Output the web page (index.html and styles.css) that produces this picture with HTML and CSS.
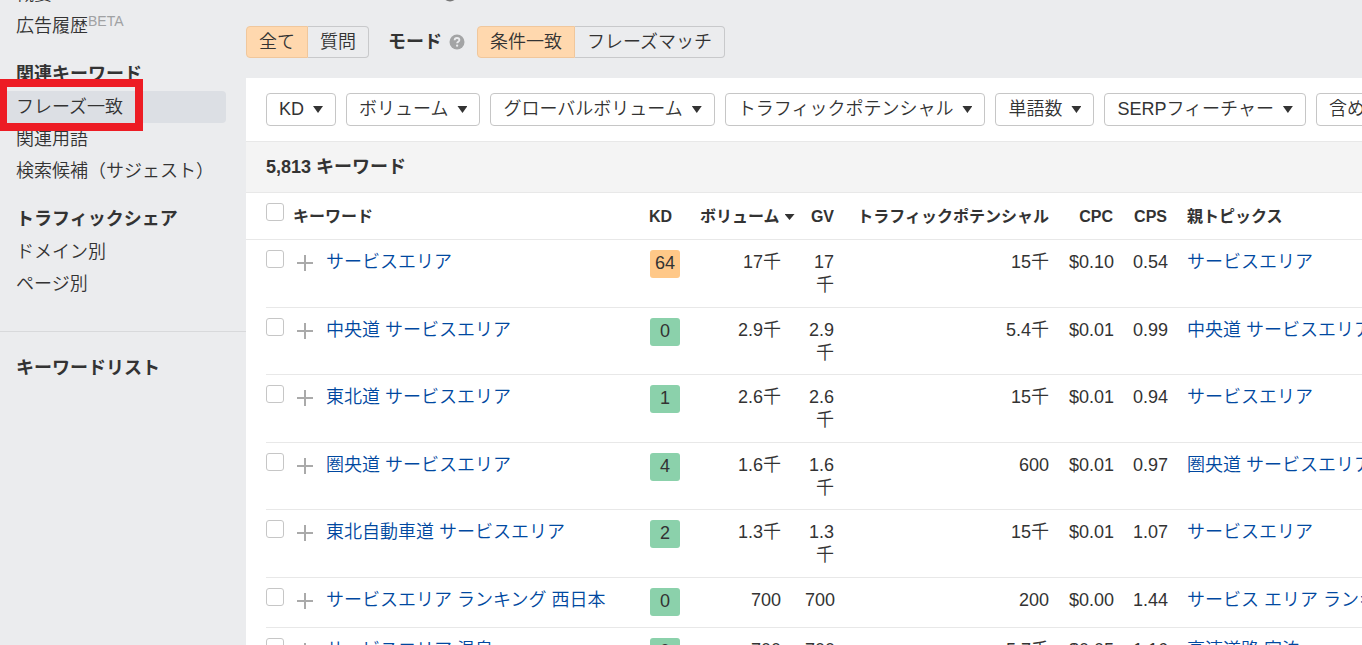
FILE: index.html
```html
<!DOCTYPE html>
<html lang="ja">
<head>
<meta charset="utf-8">
<title>フレーズ一致</title>
<link rel="stylesheet" href="styles.css">
</head>
<body>
<div class="app">
  <nav class="sidebar" aria-label="メニュー">
    <ul class="menu menu-top">
      <li><a class="item" href="#">概要</a></li>
      <li><a class="item" href="#">広告履歴<sup class="beta">BETA</sup></a></li>
    </ul>
    <h2 class="menu-title">関連キーワード</h2>
    <ul class="menu">
      <li class="marked"><a class="item selected" href="#" aria-current="page">フレーズ一致</a><span class="marker"></span></li>
      <li><a class="item" href="#">関連用語</a></li>
      <li><a class="item" href="#">検索候補（サジェスト）</a></li>
    </ul>
    <h2 class="menu-title">トラフィックシェア</h2>
    <ul class="menu">
      <li><a class="item" href="#">ドメイン別</a></li>
      <li><a class="item" href="#">ページ別</a></li>
    </ul>
    <div class="lists"><h2 class="menu-title">キーワードリスト</h2></div>
  </nav>
  <main class="main">
    <div class="title-row">
      <svg class="help" viewBox="0 0 16 16" aria-hidden="true"><circle cx="8" cy="8" r="7.5" fill="#777"/></svg>
    </div>
    <div class="modes">
      <div class="segment">
        <button class="seg on" type="button">全て</button>
        <button class="seg" type="button">質問</button>
      </div>
      <div class="mode-label">モード
        <svg class="help" viewBox="0 0 16 16" aria-hidden="true"><circle cx="8" cy="8" r="7.5" fill="#a3a4a5"/><path d="M5.6 6.3C5.7 4.9 6.7 4 8 4c1.400 0 2.400.8 2.400 2 0 1.700-2.300 1.700-2.300 3.300" fill="none" stroke="#ebecee" stroke-width="1.800"/><circle cx="8.100" cy="11.700" r="1.150" fill="#ebecee"/></svg>
      </div>
      <div class="segment">
        <button class="seg on" type="button">条件一致</button>
        <button class="seg" type="button">フレーズマッチ</button>
      </div>
    </div>
    <section class="panel">
      <div class="filters">
        <button class="filter" type="button">KD<i class="caret"></i></button>
        <button class="filter" type="button">ボリューム<i class="caret"></i></button>
        <button class="filter" type="button">グローバルボリューム<i class="caret"></i></button>
        <button class="filter" type="button">トラフィックポテンシャル<i class="caret"></i></button>
        <button class="filter" type="button">単語数<i class="caret"></i></button>
        <button class="filter" type="button">SERPフィーチャー<i class="caret"></i></button>
        <button class="filter" type="button">含める<i class="caret"></i></button>
      </div>
      <div class="count">5,813 キーワード</div>
      <div class="table-wrap">
        <table class="keywords">
          <colgroup><col class="c-check"><col class="c-plus"><col><col class="c-kd"><col class="c-vol"><col class="c-gv"><col class="c-tp"><col class="c-cpc"><col class="c-cps"><col class="c-topic"></colgroup>
          <thead>
            <tr><th class="check"><input type="checkbox" aria-label="全て選択"></th><th class="kw" colspan="2">キーワード</th><th class="kd">KD</th><th class="num vol">ボリューム<i class="caret sort"></i></th><th class="num gv">GV</th><th class="num">トラフィックポテンシャル</th><th class="num">CPC</th><th class="num">CPS</th><th class="topic">親トピックス</th></tr>
          </thead>
          <tbody>
            <tr><td class="check"><input type="checkbox" aria-label="サービスエリア"></td><td class="plus"><button type="button" aria-label="追加"></button></td><td><a href="#">サービスエリア</a></td><td class="kd"><span class="badge hard">64</span></td><td class="num">17千</td><td class="num gv">17千</td><td class="num">15千</td><td class="num">$0.10</td><td class="num">0.54</td><td class="topic"><a href="#">サービスエリア</a></td></tr>
            <tr><td class="check"><input type="checkbox" aria-label="中央道 サービスエリア"></td><td class="plus"><button type="button" aria-label="追加"></button></td><td><a href="#">中央道 サービスエリア</a></td><td class="kd"><span class="badge">0</span></td><td class="num">2.9千</td><td class="num gv">2.9千</td><td class="num">5.4千</td><td class="num">$0.01</td><td class="num">0.99</td><td class="topic"><a href="#">中央道 サービスエリア</a></td></tr>
            <tr><td class="check"><input type="checkbox" aria-label="東北道 サービスエリア"></td><td class="plus"><button type="button" aria-label="追加"></button></td><td><a href="#">東北道 サービスエリア</a></td><td class="kd"><span class="badge">1</span></td><td class="num">2.6千</td><td class="num gv">2.6千</td><td class="num">15千</td><td class="num">$0.01</td><td class="num">0.94</td><td class="topic"><a href="#">サービスエリア</a></td></tr>
            <tr><td class="check"><input type="checkbox" aria-label="圏央道 サービスエリア"></td><td class="plus"><button type="button" aria-label="追加"></button></td><td><a href="#">圏央道 サービスエリア</a></td><td class="kd"><span class="badge">4</span></td><td class="num">1.6千</td><td class="num gv">1.6千</td><td class="num">600</td><td class="num">$0.01</td><td class="num">0.97</td><td class="topic"><a href="#">圏央道 サービスエリア</a></td></tr>
            <tr><td class="check"><input type="checkbox" aria-label="東北自動車道 サービスエリア"></td><td class="plus"><button type="button" aria-label="追加"></button></td><td><a href="#">東北自動車道 サービスエリア</a></td><td class="kd"><span class="badge">2</span></td><td class="num">1.3千</td><td class="num gv">1.3千</td><td class="num">15千</td><td class="num">$0.01</td><td class="num">1.07</td><td class="topic"><a href="#">サービスエリア</a></td></tr>
            <tr><td class="check"><input type="checkbox" aria-label="サービスエリア ランキング 西日本"></td><td class="plus"><button type="button" aria-label="追加"></button></td><td><a href="#">サービスエリア ランキング 西日本</a></td><td class="kd"><span class="badge">0</span></td><td class="num">700</td><td class="num gv">700</td><td class="num">200</td><td class="num">$0.00</td><td class="num">1.44</td><td class="topic"><a href="#">サービス エリア ランキング</a></td></tr>
            <tr><td class="check"><input type="checkbox" aria-label="サービスエリア 温泉"></td><td class="plus"><button type="button" aria-label="追加"></button></td><td><a href="#">サービスエリア 温泉</a></td><td class="kd"><span class="badge">0</span></td><td class="num">700</td><td class="num gv">700</td><td class="num">5.7千</td><td class="num">$0.05</td><td class="num">1.16</td><td class="topic"><a href="#">高速道路 宿泊</a></td></tr>
          </tbody>
        </table>
      </div>
    </section>
  </main>
</div>
</body>
</html>
```
FILE: styles.css
```css
* { box-sizing: border-box; }
body {
  margin: 0;
  background: #ebecee;
  color: #333;
  font: 350 18px/23px "Liberation Sans", "Noto Sans CJK JP", sans-serif;
}
button, input { font: inherit; color: inherit; margin: 0; }
a { color: #0048a0; text-decoration: none; }
.app { display: flex; height: 100vh; overflow: hidden; }

.sidebar { flex: 0 0 246px; line-height: 32px; }
.menu { list-style: none; margin: 0; padding: 0; }
.menu-top { margin-top: -22px; }
.item { display: block; width: 226px; height: 32px; padding-left: 16px; color: #333; border-radius: 0 4px 4px 0; white-space: nowrap; }
.selected { background: #dcdfe4; }
.beta { font-size: 14px; line-height: 1; color: #a0a1a3; vertical-align: 6px; }
.menu-title { margin: 15px 0 0; padding-left: 16px; font-size: 18px; line-height: 34px; font-weight: 700; }
.lists { margin-top: 31px; padding-top: 4px; border-top: 1px solid #d8d9db; }
.marked { position: relative; }
.marker { position: absolute; left: -1px; top: -12px; width: 144px; height: 52px; border: 8px solid #ed1c24; }

.main { flex: 1; min-width: 0; }
.title-row { display: flex; align-items: center; height: 16px; margin: -14px 0 24px; padding-left: 196px; }
.modes { display: flex; align-items: center; }
.segment { display: flex; }
.seg { height: 32px; padding: 0 12px; border: 1px solid #c8c9cb; background: transparent; line-height: 28px; white-space: nowrap; }
.seg:first-child { border-radius: 4px 0 0 4px; border-right: 0; }
.seg:last-child { border-radius: 0 4px 4px 0; border-left: 0; }
.seg.on { background: #ffd8ae; border: 1px solid #f0c79c; }
.mode-label { display: flex; align-items: center; gap: 7px; margin: 0 12px 0 19px; font-weight: 700; }
.help { width: 16px; height: 16px; }

.panel { margin-top: 20px; background: #fff; }
.filters { display: flex; gap: 10px; padding: 15px 0 15px 20px; border-bottom: 1px solid #e8e8e8; overflow: hidden; }
.filter { display: flex; align-items: center; flex: none; gap: 9px; height: 33px; padding: 0 12px; border: 1px solid #c6c6c6; border-radius: 4px; background: #fff; white-space: nowrap; }
.caret { width: 10px; height: 7px; background: #333; clip-path: polygon(0 0, 100% 0, 50% 100%); }
.count { padding: 0 20px; background: #f4f4f4; border-bottom: 1px solid #e8e8e8; font-weight: 700; line-height: 50px; }

.table-wrap { overflow: hidden; }
.keywords { width: 100%; min-width: 1214px; table-layout: fixed; border-collapse: separate; border-spacing: 0; }
.c-check { width: 47px; } .c-plus { width: 23px; } .c-kd { width: 50px; } .c-vol { width: 101px; }
.c-gv { width: 53px; } .c-tp { width: 215px; } .c-cpc { width: 64px; } .c-cps { width: 54px; } .c-topic { width: 283px; }
th, td { padding: 0 10px; text-align: left; vertical-align: top; white-space: nowrap; border-bottom: 1px solid #e8e8e8; }
th { height: 47px; padding-top: 12px; font-size: 16px; font-weight: 700; }
td { padding-top: 11px; padding-bottom: 10px; }
tr:nth-child(even) td { padding-bottom: 9px; }
td:nth-child(3) { overflow: hidden; }
.num { text-align: right; }
th.kw { padding-left: 0; }
th.kd { padding-left: 9px; }
th.vol { padding-right: 0; }
th.gv { padding-left: 0; }
.sort { display: inline-block; margin-left: 5px; height: 6px; vertical-align: 2px; }
td.gv { white-space: normal; padding-left: 14px; }
td.check, th.check { padding: 10px 0 0 20px; border-bottom: 0; background: linear-gradient(#e8e8e8, #e8e8e8) 20px 100% / 100% 1px no-repeat; }
th.check { background-position: 0 100%; }
.check input { display: block; appearance: none; width: 18px; height: 18px; border: 1px solid #c6c6c6; border-radius: 3px; background: #fff; }
.check input:checked { background: #0048a0; }
td.plus { padding: 15px 0 0 4px; }
.plus button { display: block; width: 16px; height: 16px; padding: 0; border: 0; background: linear-gradient(#aaa, #aaa) center / 16px 2px no-repeat, linear-gradient(#aaa, #aaa) center / 2px 16px no-repeat; }
.badge { display: block; width: 30px; height: 28px; border-radius: 3px; background: #8bd1ab; text-align: center; line-height: 26px; }
.hard { background: #ffc888; }
td.kd, tr:nth-child(even) td.kd { padding-top: 10px; padding-bottom: 11px; }
```
